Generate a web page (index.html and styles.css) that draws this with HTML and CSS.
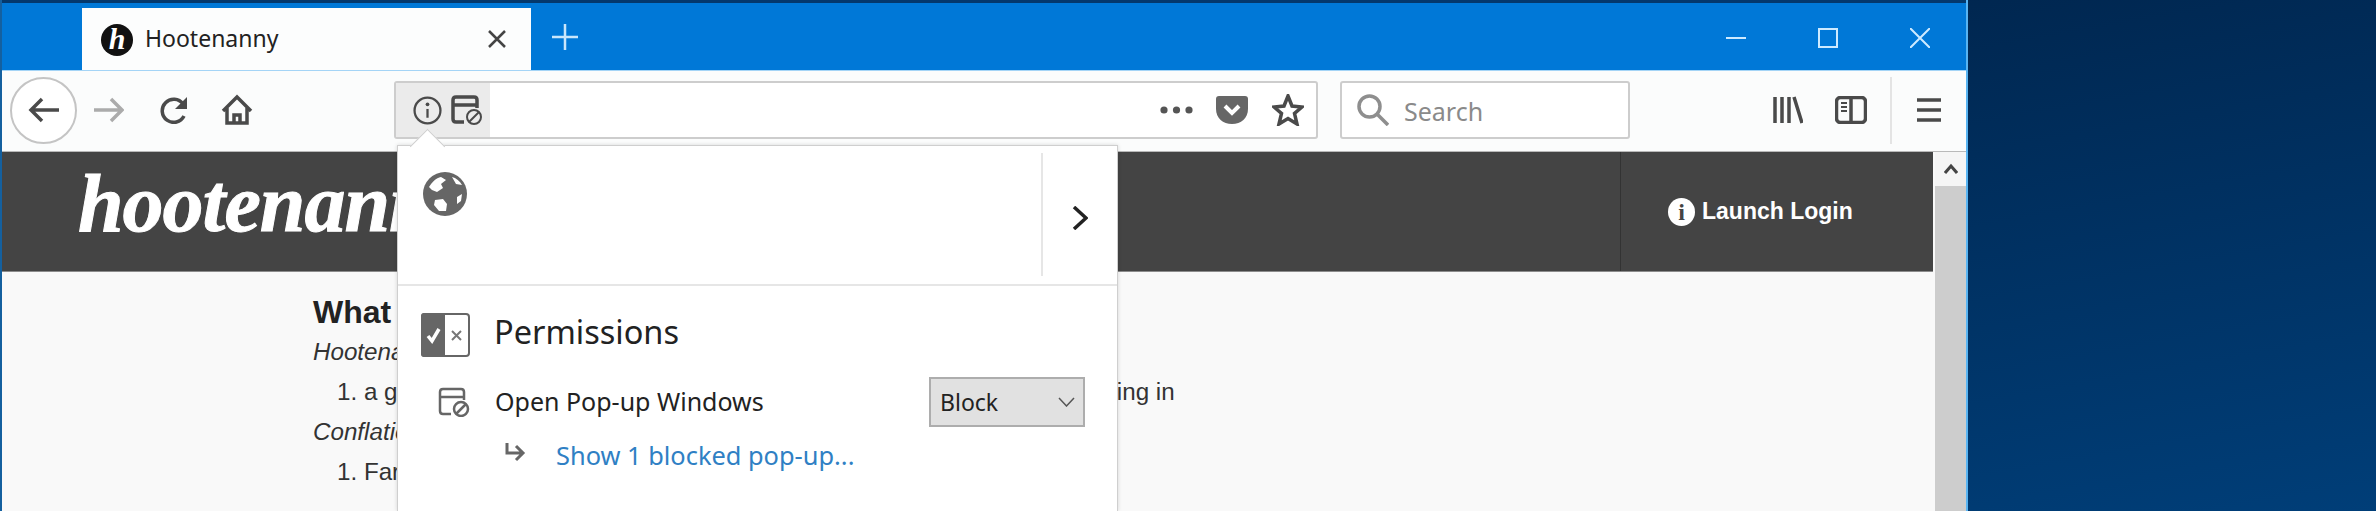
FILE: index.html
```html
<!DOCTYPE html>
<html>
  <head>
    <meta charset="UTF-8" />
    <meta name="viewport" content="width=device-width, initial-scale=1.0" />
    <title>Hootenanny</title>
    <link rel="stylesheet" href="styles.css">
  </head>
  <body>
    <div class="window">
      <!-- title bar with the tab strip -->
      <div class="titlebar">
        <div class="tab">
          <span class="favicon">h</span>
          <span class="tab-title">Hootenanny</span>
          <svg class="tab-close" viewBox="0 0 20 20"><path d="M2 2 18 18M18 2 2 18" /></svg>
        </div>
        <svg class="new-tab" viewBox="0 0 28 28"><path d="M14 1V27M1 14H27" /></svg>
        <svg class="win-min" viewBox="0 0 20 20"><path d="M0 10H20" /></svg>
        <svg class="win-max" viewBox="0 0 20 20"><rect x="1" y="1" width="18" height="18" /></svg>
        <svg class="win-close" viewBox="0 0 20 20"><path d="M0 0 20 20M20 0 0 20" /></svg>
      </div>

      <!-- navigation toolbar -->
      <div class="toolbar">
        <div class="back-button">
          <svg class="icon-back" viewBox="0 0 32 28"><path d="M31 14H3M14 3 3 14 14 25" /></svg>
        </div>
        <svg class="icon-forward" viewBox="0 0 30 26"><path d="M0 13H27M17 2 28 13 17 24" /></svg>
        <svg class="icon-reload" viewBox="0 0 30 28"><path d="M24 8A11.500 11.500 0 1 0 25 20" /><path class="solid" d="M28 1V13H16Z" /></svg>
        <svg class="icon-home" viewBox="0 0 32 32"><path d="M2 17 16 3 30 17M6 14V29H26V14M13 29V21H19V29" /></svg>

        <div class="urlbar">
          <div class="identity">
            <svg class="icon-info" viewBox="0 0 28 28">
              <circle cx="14" cy="14" r="12.500" />
              <path d="M14 12.500V21" />
              <circle class="solid" cx="14" cy="8" r="1.800" />
            </svg>
            <svg class="icon-popup" viewBox="0 0 32 30">
              <path d="M13 27H5Q2 27 2 24V5Q2 2 5 2H23Q26 2 26 5V13M2 10H26" />
              <circle cx="23" cy="22" r="7" />
              <path d="M18 27 28 17" />
            </svg>
          </div>
          <div class="url-actions">
            <svg class="icon-dots" viewBox="0 0 33 8"><circle cx="4" cy="4" r="3.600" /><circle cx="16.500" cy="4" r="3.600" /><circle cx="29" cy="4" r="3.600" /></svg>
            <svg class="icon-pocket" viewBox="0 0 32 28">
              <path d="M3 0H29Q32 0 32 3V13C32 22 25 28 16 28S0 22 0 13V3Q0 0 3 0Z" />
              <path class="notch" d="M9 10 16 17 23 10" />
            </svg>
            <svg class="icon-star" viewBox="0 0 32 32"><path d="M16 2 20 12 30 13 22.500 19.500 25 30 16 24.500 7 30 9.500 19.500 2 13 12 12Z" /></svg>
          </div>
        </div>

        <div class="searchbar">
          <svg class="icon-search" viewBox="0 0 32 32"><circle cx="12.500" cy="12.500" r="10.500" /><path d="M20 20 31 31" /></svg>
          <span class="search-text">Search</span>
        </div>

        <svg class="icon-library" viewBox="0 0 30 28"><path d="M2 1V27M9 1V27M16 1V27M21 1 29 27" /></svg>
        <svg class="icon-sidebar" viewBox="0 0 32 28">
          <rect x="1.500" y="1.500" width="29" height="25" rx="4" />
          <path d="M16 1.500V26.500" />
          <path class="thin" d="M6 7H12M6 11H12M6 15H12" />
        </svg>
        <div class="toolbar-sep"></div>
        <svg class="icon-menu" viewBox="0 0 24 24"><path d="M0 2H24M0 12H24M0 22H24" /></svg>
      </div>

      <!-- web page underneath -->
      <div class="content">
        <div class="page">
          <div class="site-header">
            <div class="site-logo">hootenanny</div>
            <div class="site-login">
              <span class="login-icon">i</span>
              <span>Launch Login</span>
            </div>
          </div>
          <div class="article">
            <h2 class="article-title">What is a Hootenanny?</h2>
            <p class="article-line"><em>Hootenanny:</em></p>
            <p class="article-item">1. a gathering at which folk singers entertain, often with the audience joining in</p>
            <p class="article-line"><em>Conflation:</em></p>
            <p class="article-item">1. Farm party</p>
          </div>
        </div>
        <div class="scrollbar">
          <div class="scroll-up">
            <svg viewBox="0 0 14 12"><path d="M1 10 7 3 13 10" /></svg>
          </div>
          <div class="scroll-thumb"></div>
        </div>
      </div>

      <!-- site identity popup, open over the page -->
      <div class="panel">
        <div class="panel-arrow"></div>
        <div class="panel-head">
          <div class="panel-host">
            <svg class="icon-globe" viewBox="0 0 44 44">
              <circle cx="22" cy="22" r="22" fill="#666" />
              <path fill="#fff" d="M6 15C9 10 13 6 18 5L23 8 18 12 20 16 14 20 9 18ZM29 5C33 6 37 9 39 13L33 12ZM12 28 20 27 24 32 23 39 16 39 11 33ZM34 25 39 22 38 29 34 32Z" />
            </svg>
          </div>
          <div class="panel-sep"></div>
          <div class="panel-more">
            <svg viewBox="0 0 16 24"><path d="M2 1 14 12 2 23" /></svg>
          </div>
        </div>

        <div class="panel-body">
          <div class="perm-title-row">
            <svg class="icon-perms" viewBox="0 0 49 44">
              <rect x="1" y="1" width="47" height="42" rx="3" fill="#fff" stroke="#666" stroke-width="2" />
              <path fill="#666" d="M3 0H24V44H3Q0 44 0 41V3Q0 0 3 0Z" />
              <path fill="none" stroke="#fff" stroke-width="3.500" d="M7 23 11 28 18 16" />
              <path fill="none" stroke="#777" stroke-width="2" d="M31 18 40 27M40 18 31 27" />
            </svg>
            <span class="perm-title">Permissions</span>
          </div>
          <div class="perm-row">
            <svg class="icon-popup-grey" viewBox="0 0 32 30">
              <path d="M13 27H5Q2 27 2 24V5Q2 2 5 2H23Q26 2 26 5V13M2 10H26" />
              <circle cx="23" cy="22" r="7" />
              <path d="M18 27 28 17" />
            </svg>
            <span class="perm-label">Open Pop-up Windows</span>
            <div class="perm-select">
              <span>Block</span>
              <svg viewBox="0 0 17 10"><path d="M1 1 8.500 9 16 1" /></svg>
            </div>
          </div>
          <div class="perm-link-row">
            <svg class="icon-return" viewBox="0 0 21 19"><path d="M2 0V10H18M11 3 18 10 11 17" /></svg>
            <span class="perm-link">Show 1 blocked pop-up...</span>
          </div>
        </div>
      </div>
    </div>
  </body>
</html>
```

FILE: styles.css
```css
html,
body {
  margin: 0;
  height: 100%;
  overflow: hidden;
}

body {
  background-color: #002a58;
  background-image: linear-gradient(170deg, #001f40 0%, #00264f 35%, #003e78 100%);
  font-family: "Noto Sans", "Open Sans", sans-serif;
}

svg {
  display: block;
  flex: none;
  fill: none;
}

.window {
  position: relative;
  box-sizing: border-box;
  width: 1968px;
  height: 511px;
  display: flex;
  flex-direction: column;
  border-left: 2px solid #14609f;
  border-right: 2px solid #58b4f2;
  overflow: hidden;
}

/* title bar */
.titlebar {
  box-sizing: border-box;
  height: 70px;
  flex: none;
  display: flex;
  align-items: flex-start;
  background-color: #0078d7;
  border-top: 3px solid #04386c;
}

.tab {
  box-sizing: border-box;
  width: 449px;
  height: 62px;
  margin: 5px 0 0 80px;
  padding: 0 24px 0 19px;
  display: flex;
  align-items: center;
  background-color: #fcfdfd;
}

.favicon {
  width: 32px;
  height: 32px;
  margin-top: 1px;
  border-radius: 50%;
  background-color: #111;
  color: #fff;
  font: italic bold 30px/30px "Liberation Serif", serif;
  text-align: center;
}

.tab-title {
  margin: 0 0 2px 12px;
  font-size: 23px;
  color: #222;
}

.tab-close {
  width: 20px;
  height: 20px;
  margin-left: auto;
  stroke: #444;
  stroke-width: 2.500;
}

.new-tab {
  width: 28px;
  height: 28px;
  margin: 20px 0 0 20px;
  stroke: #c9e6fb;
  stroke-width: 2.500;
}

.win-min,
.win-max,
.win-close {
  width: 20px;
  height: 20px;
  margin-top: 25px;
  stroke: #cdeaff;
  stroke-width: 2;
}

.win-min {
  margin-left: 1147px;
}

.win-max {
  margin-left: 72px;
}

.win-close {
  margin-left: 72px;
}

/* toolbar */
.toolbar {
  box-sizing: border-box;
  height: 82px;
  flex: none;
  display: flex;
  align-items: center;
  padding-bottom: 2px;
  background-color: #fbfcfc;
  border-top: 1px solid #a4d4f6;
  border-bottom: 1px solid #b9b9b9;
}

.toolbar svg {
  stroke: #4a4a4a;
  stroke-width: 3.500;
}

.back-button {
  box-sizing: border-box;
  width: 67px;
  height: 67px;
  margin-left: 8px;
  display: flex;
  align-items: center;
  justify-content: center;
  border: 2px solid #c4c4c4;
  border-radius: 50%;
  background-color: #fff;
}

.icon-back {
  width: 32px;
  height: 28px;
}

.toolbar .icon-forward {
  width: 30px;
  height: 26px;
  margin-left: 17px;
  stroke: #ababab;
}

.icon-reload {
  width: 30px;
  height: 28px;
  margin-left: 35px;
}

.toolbar .solid {
  fill: #4a4a4a;
  stroke: none;
}

.icon-home {
  width: 32px;
  height: 32px;
  margin-left: 32px;
}

.urlbar {
  box-sizing: border-box;
  width: 924px;
  height: 58px;
  margin-left: 141px;
  display: flex;
  align-items: center;
  background-color: #fff;
  border: 2px solid #cdcdcd;
  border-radius: 3px;
}

.identity {
  box-sizing: border-box;
  width: 94px;
  height: 100%;
  padding-left: 17px;
  display: flex;
  align-items: center;
  background-color: #ebebeb;
}

.toolbar .icon-info {
  width: 29px;
  height: 29px;
  stroke-width: 2.200;
}

.toolbar .icon-popup {
  width: 32px;
  height: 30px;
  margin-left: 9px;
}

.toolbar .icon-popup circle,
.toolbar .icon-popup path:last-child {
  stroke-width: 2;
}

.url-actions {
  margin-left: auto;
  display: flex;
  align-items: center;
}

.icon-dots {
  width: 33px;
  height: 8px;
  fill: #555;
}

.toolbar .icon-dots {
  stroke: none;
}

.icon-pocket {
  width: 32px;
  height: 28px;
  margin-left: 23px;
  fill: #666;
}

.toolbar .icon-pocket {
  stroke: none;
}

.toolbar .icon-pocket .notch {
  fill: none;
  stroke: #fff;
  stroke-width: 4;
}

.icon-star {
  width: 32px;
  height: 32px;
  margin: 0 12px 0 24px;
}

.searchbar {
  box-sizing: border-box;
  width: 290px;
  height: 58px;
  margin-left: 22px;
  padding-left: 15px;
  display: flex;
  align-items: center;
  background-color: #fff;
  border: 2px solid #cdcdcd;
  border-radius: 3px;
}

.toolbar .icon-search {
  width: 32px;
  height: 32px;
  stroke: #8e8e8e;
}

.search-text {
  margin: 2px 0 0 15px;
  font-size: 25px;
  color: #8a8a8a;
}

.icon-library {
  width: 30px;
  height: 28px;
  margin-left: 143px;
}

.icon-sidebar {
  width: 32px;
  height: 28px;
  margin-left: 32px;
}

.toolbar .icon-sidebar .thin {
  stroke-width: 2;
}

.toolbar-sep {
  width: 2px;
  height: 67px;
  margin-left: 23px;
  background-color: #e4e4e4;
}

.icon-menu {
  width: 24px;
  height: 24px;
  margin-left: 25px;
}

/* page */
.content {
  flex: 1;
  min-height: 0;
  display: flex;
  background-color: #f9f9f9;
}

.page {
  width: 1931px;
  flex: none;
}

.site-header {
  box-sizing: border-box;
  height: 120px;
  display: flex;
  align-items: stretch;
  justify-content: space-between;
  background-color: #444;
  border-bottom: 1px solid #8c8c8c;
}

.site-logo {
  margin: 0 0 0 76px;
  padding-top: 11px;
  font: italic bold 82px/82px "Liberation Serif", serif;
  color: #fff;
  letter-spacing: -1px;
  -webkit-text-stroke: 1px #fff;
}

.site-login {
  box-sizing: border-box;
  width: 313px;
  padding: 0 0 0 47px;
  display: flex;
  align-items: center;
  border-left: 1px solid #333;
  font: bold 23px "Liberation Sans", Arial, sans-serif;
  color: #fff;
}

.login-icon {
  width: 27px;
  height: 28px;
  margin-right: 7px;
  border-radius: 50%;
  background-color: #fff;
  color: #444;
  font: bold 24px/28px "Liberation Serif", serif;
  text-align: center;
}

.article {
  padding: 20px 0 0 311px;
  font: 24.200px/40px "Liberation Sans", Arial, sans-serif;
  color: #333;
}

.article-title {
  margin: 0;
  font-size: 32px;
  line-height: 40px;
  color: #222;
}

.article-line,
.article-item {
  margin: 0;
}

.article-item {
  padding-left: 24px;
}

.scrollbar {
  width: 31px;
  margin-left: 2px;
  display: flex;
  flex-direction: column;
  background-color: #f5f5f5;
}

.scroll-up {
  height: 34px;
  display: flex;
  align-items: center;
  justify-content: center;
  flex: none;
}

.scroll-up svg {
  width: 14px;
  height: 12px;
  stroke: #444;
  stroke-width: 3;
}

.scroll-thumb {
  flex: 1;
  background-color: #cdcdcd;
}

/* identity popup */
.panel {
  position: absolute;
  left: 395px;
  top: 145px;
  bottom: 0;
  box-sizing: border-box;
  width: 721px;
  background-color: #fff;
  border: 1px solid #cfcfcf;
  border-bottom: 0;
  box-shadow: 0 0 4px rgba(0, 0, 0, 0.15);
}

.panel-arrow {
  position: absolute;
  left: 17px;
  top: -12px;
  width: 24px;
  height: 24px;
  background-color: #fff;
  border-top: 1px solid #cfcfcf;
  border-left: 1px solid #cfcfcf;
  transform: rotate(45deg);
}

.panel-head {
  box-sizing: border-box;
  height: 140px;
  display: flex;
  border-bottom: 2px solid #e6e6e6;
}

.panel-host {
  flex: 1;
  padding: 26px 0 0 25px;
}

.icon-globe {
  width: 44px;
  height: 44px;
}

.panel-sep {
  width: 2px;
  height: 123px;
  margin-top: 7px;
  background-color: #e6e6e6;
}

.panel-more {
  width: 74px;
  display: flex;
  align-items: center;
  justify-content: center;
  padding-top: 5px;
  box-sizing: border-box;
}

.panel-more svg {
  width: 16px;
  height: 24px;
  stroke: #222;
  stroke-width: 3.500;
}

.panel-body {
  padding: 27px 32px 0 23px;
}

.perm-title-row {
  display: flex;
  align-items: center;
}

.icon-perms {
  width: 49px;
  height: 44px;
}

.perm-title {
  margin: 0 0 6px 24px;
  font-size: 32.500px;
  line-height: 38px;
  color: #222;
}

.perm-row {
  margin-top: 20px;
  display: flex;
  align-items: center;
}

.icon-popup-grey {
  width: 32px;
  height: 30px;
  margin-left: 17px;
  stroke: #666;
  stroke-width: 2.500;
}

.perm-label {
  margin: 0 0 2px 25px;
  font-size: 25px;
  color: #222;
}

.perm-select {
  box-sizing: border-box;
  width: 156px;
  height: 50px;
  margin-left: auto;
  padding: 0 8px 0 9px;
  display: flex;
  align-items: center;
  justify-content: space-between;
  background-color: #e1e1e1;
  border: 2px solid #adadad;
  font-size: 23px;
  color: #222;
}

.perm-select svg {
  width: 17px;
  height: 10px;
  stroke: #555;
  stroke-width: 1.500;
}

.perm-link-row {
  margin-top: 11px;
  display: flex;
  align-items: center;
}

.icon-return {
  width: 21px;
  height: 19px;
  margin: 0 0 6px 84px;
  stroke: #666;
  stroke-width: 3;
}

.perm-link {
  margin-left: 30px;
  font-size: 25.400px;
  color: #2f80c4;
}
```
